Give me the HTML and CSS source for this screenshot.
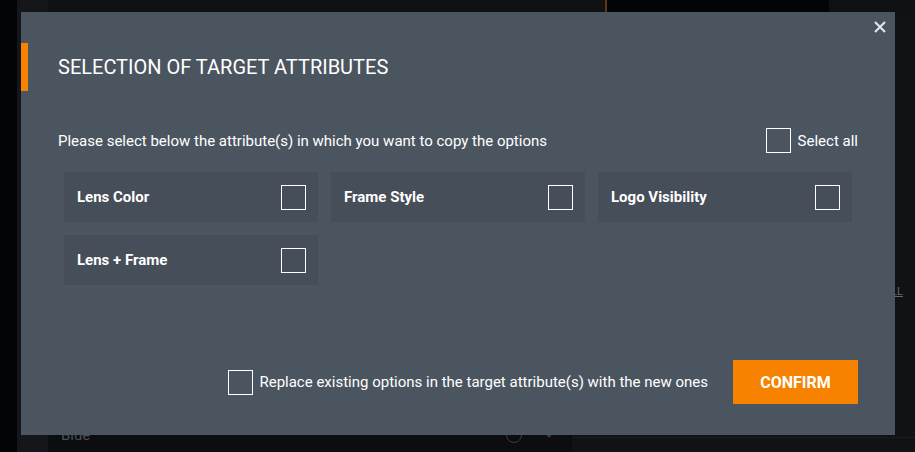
FILE: index.html
```html
<!DOCTYPE html>
<html lang="en">
<head>
<meta charset="utf-8">
<title>Selection of target attributes</title>
<link rel="stylesheet" href="styles.css">
</head>
<body>
<div class="app">
  <div class="rail"></div>
  <div class="side"></div>
  <div class="main">
    <div class="topbar">
      <div class="tb-left"></div>
      <div class="tb-sep"></div>
      <div class="tb-dark"></div>
      <div class="tb-right"></div>
    </div>
    <div class="content">
      <div class="list">
        <div class="list-row">
          <span class="list-name">Blue</span>
          <span class="list-icons">
            <span class="ring"></span>
            <span class="tri"></span>
          </span>
        </div>
      </div>
      <div class="panel">
        <div class="panel-row"><span class="panel-link">ALL</span></div>
        <div class="panel-foot"></div>
      </div>
    </div>
  </div>
</div>

<div class="modal">
  <button class="close" aria-label="Close">
    <svg width="12" height="12" viewBox="0 0 12 12"><path d="M1 1 L11 11 M11 1 L1 11" stroke="#e6e8ea" stroke-width="2" fill="none"/></svg>
  </button>
  <div class="header">
    <h2 class="title">SELECTION OF TARGET ATTRIBUTES</h2>
  </div>
  <div class="intro">
    <span class="intro-text">Please select below the attribute(s) in which you want to copy the options</span>
    <label class="select-all"><span class="check"></span><span>Select all</span></label>
  </div>
  <div class="grid">
    <div class="card"><span>Lens Color</span><span class="check"></span></div>
    <div class="card"><span>Frame Style</span><span class="check"></span></div>
    <div class="card"><span>Logo Visibility</span><span class="check"></span></div>
    <div class="card"><span>Lens + Frame</span><span class="check"></span></div>
  </div>
  <div class="footer">
    <label class="replace"><span class="check"></span><span>Replace existing options in the target attribute(s) with the new ones</span></label>
    <button class="confirm">CONFIRM</button>
  </div>
</div>
</body>
</html>
```

FILE: styles.css
```css
html, body {
  margin: 0;
  padding: 0;
}
body {
  width: 915px;
  height: 452px;
  overflow: hidden;
  background: #0c0d0f;
  font-family: Roboto, "Liberation Sans", sans-serif;
  position: relative;
}

/* background app */
.app {
  display: flex;
  width: 915px;
  height: 452px;
}
.rail {
  width: 17px;
  background: #030405;
}
.side {
  width: 31px;
  background: #141619;
}
.main {
  flex: 1;
  display: flex;
  flex-direction: column;
}
.topbar {
  height: 16px;
  display: flex;
  background: #0f1113;
}
.tb-left {
  width: 557px;
}
.tb-sep {
  width: 2px;
  background: #5a3a14;
}
.tb-dark {
  width: 222px;
  background: #030405;
}
.tb-right {
  flex: 1;
}
.content {
  flex: 1;
  display: flex;
}
.list {
  width: 524px;
  display: flex;
  flex-direction: column;
  justify-content: flex-end;
}
.list-row {
  height: 34px;
  display: flex;
  align-items: center;
  justify-content: space-between;
  padding: 0 18px 0 13px;
  color: #4a4d52;
  font-size: 15px;
}
.list-icons {
  display: flex;
  align-items: center;
  gap: 22px;
}
.ring {
  width: 16px;
  height: 16px;
  box-sizing: border-box;
  border: 1.5px solid #3a3d42;
  border-radius: 50%;
}
.tri {
  width: 0;
  height: 0;
  border-left: 5px solid transparent;
  border-right: 5px solid transparent;
  border-top: 6px solid #3a3d42;
}
.panel {
  flex: 1;
  display: flex;
  flex-direction: column;
  background: #101214;
}
.panel-row {
  margin-top: 264px;
  text-align: right;
  padding-right: 12px;
}
.panel-link {
  color: #666a70;
  font-size: 11px;
  text-decoration: underline;
}
.panel-foot {
  margin-top: auto;
  height: 14px;
  border-top: 1px solid #1a1c1f;
}

/* modal */
.modal {
  position: absolute;
  left: 21px;
  top: 12px;
  width: 874px;
  height: 423px;
  box-sizing: border-box;
  background: #4b5560;
  padding: 31px 37px 31px 37px;
  display: flex;
  flex-direction: column;
  color: #ffffff;
}
.close {
  position: absolute;
  top: 9px;
  right: 9px;
  width: 12px;
  height: 12px;
  padding: 0;
  border: 0;
  background: none;
  display: flex;
}
.header {
  height: 48px;
  margin-left: -37px;
  border-left: 7px solid #f78200;
  padding-left: 30px;
  display: flex;
  align-items: center;
}
.title {
  margin: 0;
  font-size: 20px;
  font-weight: 400;
  color: #ffffff;
}
.intro {
  margin-top: 37px;
  height: 25px;
  display: flex;
  align-items: center;
  justify-content: space-between;
  font-size: 15px;
}
.select-all {
  display: flex;
  align-items: center;
  gap: 7px;
}
.check {
  width: 25px;
  height: 25px;
  box-sizing: border-box;
  border: 1px solid #ffffff;
  flex: none;
}
.grid {
  margin: 19px 6px 0 6px;
  display: grid;
  grid-template-columns: repeat(3, 1fr);
  grid-auto-rows: 50px;
  gap: 13px;
}
.card {
  background: #454e59;
  display: flex;
  align-items: center;
  justify-content: space-between;
  padding: 0 12px 0 13px;
  font-size: 15px;
  font-weight: 700;
}
.footer {
  margin-top: auto;
  height: 44px;
  display: flex;
  align-items: center;
  justify-content: flex-end;
  font-size: 15px;
}
.replace {
  display: flex;
  align-items: center;
  gap: 6px;
}
.confirm {
  margin-left: 25px;
  width: 125px;
  height: 44px;
  border: 0;
  background: #f78200;
  color: #ffffff;
  font-family: Roboto, "Liberation Sans", sans-serif;
  font-size: 16px;
  font-weight: 700;
  padding: 0;
}
```
